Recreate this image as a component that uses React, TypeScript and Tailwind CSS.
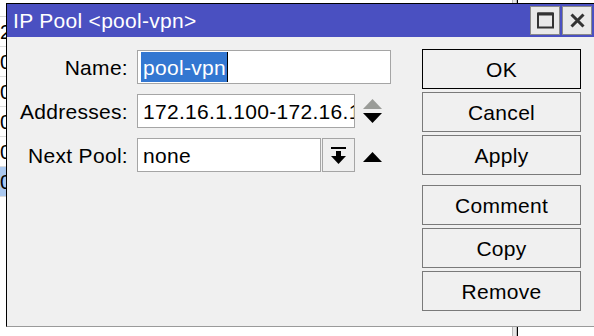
import React from 'react';

const font = { fontFamily: '"Liberation Sans", Arial, sans-serif' };

function UpTriangle({ color }: { color: string }) {
  return (
    <svg width="19" height="10" viewBox="0 0 19 10" className="block">
      <polygon points="9.5,0 19,10 0,10" fill={color} />
    </svg>
  );
}

function DownTriangle({ color }: { color: string }) {
  return (
    <svg width="19" height="10" viewBox="0 0 19 10" className="block">
      <polygon points="0,0 19,0 9.5,10" fill={color} />
    </svg>
  );
}

function FormRow({ label, children }: { label: string; children: React.ReactNode }) {
  return (
    <div className="flex items-center h-[34px]">
      <div className="w-[121px] text-right text-black">{label}</div>
      <div className="ml-[9px] flex items-center h-full">{children}</div>
    </div>
  );
}

function DlgButton({ label, primary }: { label: string; primary?: boolean }) {
  return (
    <div
      className={
        'h-[40px] w-[159px] flex items-center justify-center bg-[#f0f0f0] text-black border ' +
        (primary ? 'border-black' : 'border-[#7a7a7a]')
      }
    >
      {label}
    </div>
  );
}

export default function App() {
  const rows = ['2', '0', '0', '0', '0', '0'];

  return (
    <div
      className="relative w-[594px] h-[336px] overflow-hidden bg-white text-[21px] leading-none tracking-[0.3px]"
      style={font}
    >
      {/* page behind the window */}
      <div className="flex h-full">
        <div className="w-[512px] flex flex-col">
          <div className="h-[17px] border-b border-[#d4d4d4]" />
          {rows.map((r, i) => (
            <div
              key={i}
              className={
                'h-[30px] border-b border-[#dcdcdc] flex items-center ' +
                (i === rows.length - 1 ? 'bg-[#aac8ef]' : '')
              }
            >
              <span className="text-[20px] tracking-normal">{r}</span>
            </div>
          ))}
        </div>
        <div className="w-[5px] h-full border-x border-[#b8b8b8] bg-[#e6e6e6]" />
        <div className="flex-1 border-l border-black" />
      </div>

      {/* IP Pool window */}
      <div className="absolute left-[6px] top-[3px] w-[600px] h-[324px] flex flex-col border-l border-t border-black border-b border-b-[#9a9a9a] bg-[#f0f0f0]">
        <div className="h-[33px] bg-[#4a50c1] flex items-center pl-[6px] pr-[14px]">
          <span className="text-white">IP Pool &lt;pool-vpn&gt;</span>
          <div className="ml-auto flex gap-[2px] mt-[-1px]">
            <div className="w-[30px] h-[29px] bg-[#e9e9e9] border border-[#8a8a8a] flex items-center justify-center">
              <svg width="17" height="17" viewBox="0 0 17 17">
                <rect x="1" y="1.5" width="15" height="14" fill="none" stroke="#333" strokeWidth="2" />
                <rect x="1" y="0.5" width="15" height="3" fill="#333" />
              </svg>
            </div>
            <div className="w-[30px] h-[29px] bg-[#e9e9e9] border border-[#8a8a8a] flex items-center justify-center">
              <svg width="15" height="15" viewBox="0 0 15 15">
                <path d="M1.5 1.5 L13.5 13.5 M13.5 1.5 L1.5 13.5" stroke="#333" strokeWidth="3" />
              </svg>
            </div>
          </div>
        </div>

        <div className="flex pt-[12px]">
          <div className="flex flex-col gap-[10px] mt-[1px]">
            <FormRow label="Name:">
              <div className="w-[254px] h-full bg-white border border-[#a5a5a5] flex items-center pl-[3px]">
                <span className="bg-[#3377d1] text-white h-[30px] flex items-center px-[2px] pr-[1px] border-r border-black">
                  pool-vpn
                </span>
              </div>
            </FormRow>
            <FormRow label="Addresses:">
              <div className="w-[218px] h-full bg-white border border-[#a5a5a5] flex items-center pl-[5px] overflow-hidden whitespace-nowrap">
                172.16.1.100-172.16.1.200
              </div>
              <div className="ml-[8px] flex flex-col gap-[4px]">
                <UpTriangle color="#9a9c98" />
                <DownTriangle color="#000" />
              </div>
            </FormRow>
            <FormRow label="Next Pool:">
              <div className="w-[184px] h-full bg-white border border-[#a5a5a5] flex items-center pl-[5px]">
                none
              </div>
              <div className="ml-[1px] w-[33px] h-full bg-[#efefef] border border-[#a5a5a5] flex items-center justify-center">
                <svg width="15" height="17" viewBox="0 0 15 17">
                  <rect x="0" y="0" width="15" height="2" fill="#000" />
                  <rect x="5" y="4" width="5" height="5" fill="#000" />
                  <polygon points="0,9 15,9 7.5,17" fill="#000" />
                </svg>
              </div>
              <div className="ml-[8px] mt-[3px]">
                <UpTriangle color="#000" />
              </div>
            </FormRow>
          </div>

          <div className="ml-[31px] flex flex-col">
            <div className="flex flex-col gap-[3px]">
              <DlgButton label="OK" primary />
              <DlgButton label="Cancel" />
              <DlgButton label="Apply" />
            </div>
            <div className="mt-[10px] flex flex-col gap-[3px]">
              <DlgButton label="Comment" />
              <DlgButton label="Copy" />
              <DlgButton label="Remove" />
            </div>
          </div>
        </div>
      </div>
    </div>
  );
}
